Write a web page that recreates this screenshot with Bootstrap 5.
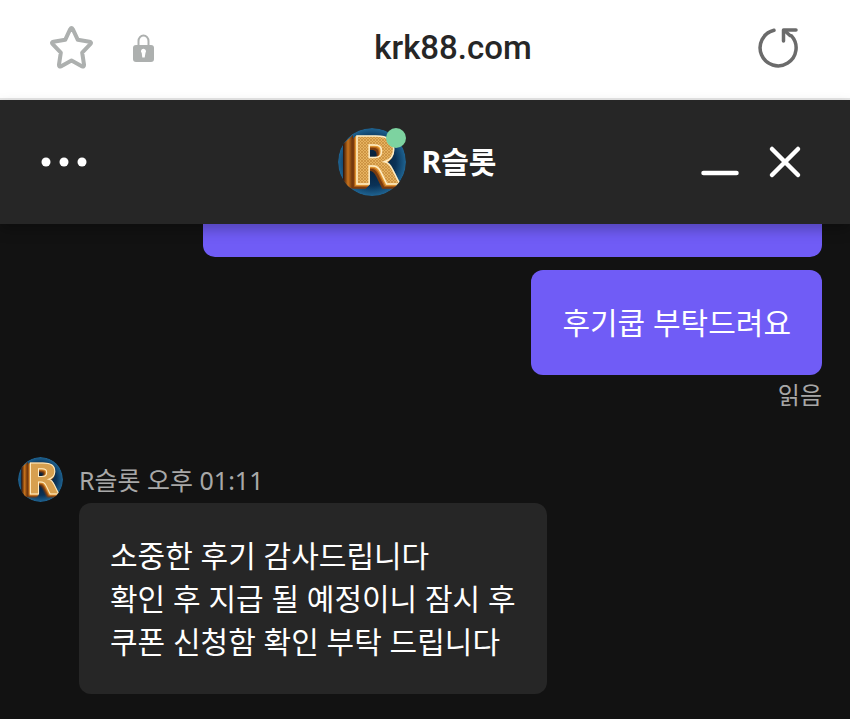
<!DOCTYPE html>
<html lang="ko">
<head>
<meta charset="utf-8">
<meta name="viewport" content="width=device-width, initial-scale=1">
<title>krk88.com</title>
<link href="https://cdn.jsdelivr.net/npm/bootstrap@5.3.0/dist/css/bootstrap.min.css" rel="stylesheet">
<style>
  body { background: #121212; font-family: "Noto Sans", "Noto Sans CJK KR", sans-serif; }
  svg { display: block; }
  .plain-btn { background: none; border: 0; padding: 0; }
  .url-bar { background: #fff; height: 100px; padding: 0 51px 3px 50px; border-bottom: 2px solid #e6e6e6; }
  .url-tools { gap: 40px; }
  .url-text { font: 500 33px/44px Roboto, sans-serif; color: #262626; padding-right: 6px; }
  .chat-head { display: grid; grid-template-columns: 1fr auto 1fr; background: #262626; height: 124px; padding: 0 48px 0 32px; box-shadow: 0 6px 12px rgba(0, 0, 0, .25); z-index: 1; }
  .head-name { font-size: 30px; line-height: 40px; font-weight: 700; color: #fff; }
  .head-tools { gap: 29px; }
  .online-dot { top: 0; right: 0; width: 20px; height: 20px; background: #7dd3a0; }
  .chat-log { padding: 0 28px 24px 18px; }
  .bubble { border-radius: 12px; padding: 31px; font-size: 30px; line-height: 43px; color: #fff; }
  .bubble-out { background: #705cf6; }
  .bubble-in { background: #262626; }
  .bubble-cut { width: 77%; height: 33px; padding: 0; border-radius: 0 0 12px 12px; margin-bottom: 13px; }
  .read-mark { font-size: 24px; line-height: 40px; color: #a8a8a8; }
  .sender-line { font-size: 25px; line-height: 46px; color: #a8a8a8; }
  .reply-row { gap: 16px; margin-top: 42px; }
</style>
<script src="https://cdn.jsdelivr.net/npm/bootstrap@5.3.0/dist/js/bootstrap.bundle.min.js"></script>
</head>
<body>
<svg width="0" height="0" class="position-absolute" aria-hidden="true">
  <defs>
    <radialGradient id="disc" cx="50%" cy="50%" r="50%">
      <stop offset="0" stop-color="#071a30"/><stop offset=".7" stop-color="#0a3257"/><stop offset="1" stop-color="#1f6492"/>
    </radialGradient>
    <linearGradient id="bronze" x1="0" y1="0" x2="1" y2="0">
      <stop offset="0" stop-color="#2a1008"/><stop offset=".5" stop-color="#c9731c"/><stop offset="1" stop-color="#5a2a0a"/>
    </linearGradient>
    <pattern id="weave" width="3" height="3" patternUnits="userSpaceOnUse">
      <rect width="3" height="3" fill="#e6b360"/><path d="M0 0L3 3M0 3L3 0" stroke="#c58a3a" stroke-width=".7"/>
    </pattern>
    <clipPath id="round"><circle cx="34" cy="34" r="34"/></clipPath>
    <symbol id="brand" viewBox="0 0 68 68">
      <g clip-path="url(#round)">
        <circle cx="34" cy="34" r="34" fill="url(#disc)"/>
        <path d="M5 16L15 7V60L5 62Z" fill="url(#bronze)"/>
        <text x="38" y="56" text-anchor="middle" font-family="DejaVu Sans" font-weight="700" font-size="65" fill="url(#weave)" stroke="#ffedc4" stroke-width="1.5" style="filter:drop-shadow(-1px 1px 0 #e39a35) drop-shadow(-1px 1px 0 #b5651a) drop-shadow(-2px 2px 0 #7a3b0e)">R</text>
      </g>
    </symbol>
  </defs>
</svg>

<header class="url-bar d-flex align-items-center">
  <div class="url-tools d-flex align-items-center">
    <button class="plain-btn" type="button" aria-label="즐겨찾기">
      <svg width="43" height="43" viewBox="0 0 43 43" fill="none" stroke="#adb0af" stroke-width="4" stroke-linejoin="round"><path d="M20.200 3.200Q21.500 1 22.800 3.200L27.800 13.800L39.500 15.700Q42 16.300 40.300 18.200L32.200 26.600L34 38.600Q34.200 41.400 31.800 40.200L21.500 34.500L11.200 40.200Q8.800 41.400 9 38.600L10.800 26.600L2.700 18.200Q1 16.300 3.500 15.700L15.200 13.800Z"/></svg>
    </button>
    <svg width="21" height="28" viewBox="0 0 21 28" role="img" aria-label="보안 연결"><path d="M5.500 12V7a5 5.500 0 0 1 10 0v5" fill="none" stroke="#adb0af" stroke-width="2"/><rect y="11" width="21" height="17" rx="3" fill="#adb0af"/><path d="M8 17.500a2.500 2.500 0 1 1 4.500 1.300l-.8 4.700h-2.400l-.6-4.700Q8 18.300 8 17.500Z" fill="#fff"/></svg>
  </div>
  <div class="url-text flex-grow-1 text-center">krk88.com</div>
  <button class="plain-btn" type="button" aria-label="새로고침">
    <svg width="41" height="41" viewBox="0 0 41 41" fill="none" stroke="#6b6b6b" stroke-width="3.500" stroke-linecap="round"><path d="M16 3.300A18 18 0 1 0 33.500 8.800"/><path d="M25.500 14V3H38" stroke-linejoin="round"/><path d="M27 4L32 8.500"/></svg>
  </button>
</header>

<section class="chat-head align-items-center position-relative">
  <button class="plain-btn" type="button" aria-label="메뉴">
    <svg width="64" height="40" viewBox="0 0 64 40" fill="#fff"><circle cx="14" cy="20" r="4.500"/><circle cx="32" cy="20" r="4.500"/><circle cx="50" cy="20" r="4.500"/></svg>
  </button>
  <div class="d-flex align-items-center gap-3">
    <div class="position-relative">
      <svg width="68" height="68" aria-hidden="true"><use href="#brand"/></svg>
      <span class="online-dot position-absolute rounded-circle"></span>
    </div>
    <div class="head-name">R슬롯</div>
  </div>
  <div class="head-tools d-flex align-items-center justify-content-end">
    <button class="plain-btn" type="button" aria-label="최소화">
      <svg width="38" height="34" viewBox="0 0 38 34" stroke="#fff" stroke-width="4.500" stroke-linecap="round"><path d="M2.500 28H35.500"/></svg>
    </button>
    <button class="plain-btn" type="button" aria-label="닫기">
      <svg width="34" height="34" viewBox="0 0 34 34" stroke="#fff" stroke-width="4.500" stroke-linecap="round"><path d="M4 4L30 30M30 4L4 30"/></svg>
    </button>
  </div>
</section>

<main class="chat-log d-flex flex-column">
  <div class="bubble bubble-out bubble-cut align-self-end"></div>
  <div class="bubble bubble-out align-self-end">후기쿱 부탁드려요</div>
  <div class="read-mark align-self-end">읽음</div>
  <div class="reply-row d-flex align-items-start">
    <svg class="flex-shrink-0" width="45" height="45" aria-hidden="true"><use href="#brand"/></svg>
    <div>
      <div class="sender-line">R슬롯 오후 01:11</div>
      <div class="bubble bubble-in">소중한 후기 감사드립니다<br>확인 후 지급 될 예정이니 잠시 후<br>쿠폰 신청함 확인 부탁 드립니다</div>
    </div>
  </div>
</main>
</body>
</html>
